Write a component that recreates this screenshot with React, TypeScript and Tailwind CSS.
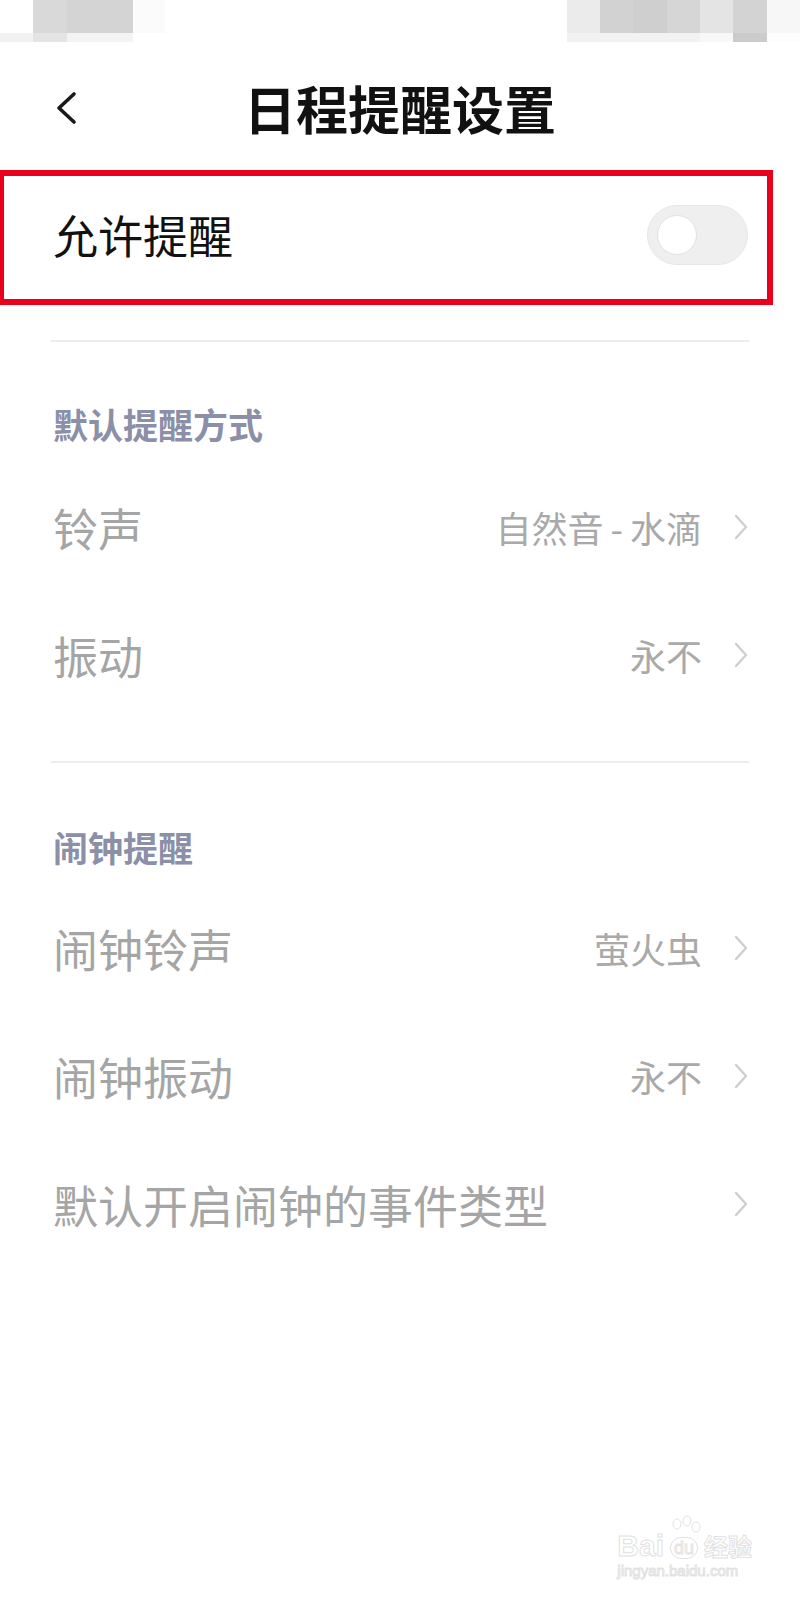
import { ReactNode } from "react";

const FONT = "font-['Noto_Sans_CJK_SC','Noto_Sans',sans-serif]";

function Chevron() {
  return (
    <svg width="16" height="28" viewBox="0 0 16 28" className="shrink-0">
      <polyline
        points="3,3 13,14 3,25"
        fill="none"
        stroke="#cfcfcf"
        strokeWidth="2.4"
        strokeLinecap="round"
        strokeLinejoin="round"
      />
    </svg>
  );
}

function Row({ label, value }: { label: string; value?: ReactNode }) {
  return (
    <div className="flex h-[128px] items-center justify-between pl-[53px] pr-[51px]">
      <span className="text-[45px] leading-[45px] text-[#a5a5a5]">{label}</span>
      <div className="flex items-center gap-[31px]">
        {value && (
          <span className="text-[36px] leading-[36px] text-[#a9a9a9]">{value}</span>
        )}
        <Chevron />
      </div>
    </div>
  );
}

function SectionHeader({ children }: { children: ReactNode }) {
  return (
    <div className="pl-[53px] text-[35px] font-semibold leading-[35px] text-[#8b8fa7]">
      {children}
    </div>
  );
}

function Divider({ className }: { className?: string }) {
  return <div className={"mx-[51px] h-[2px] bg-[#ececec] " + (className ?? "")} />;
}

// blurred status bar, drawn as mosaic blocks
function StatusBar() {
  return (
    <div className="flex h-[42px] justify-between">
      <div className="flex flex-col">
        <div className="flex h-[33px]">
          <div className="w-[33px] bg-white" />
          <div className="w-[34px] bg-[#d9d9d9]" />
          <div className="w-[66px] bg-[#d4d4d4]" />
          <div className="w-[32px] bg-[#fbfbfb]" />
        </div>
        <div className="flex h-[9px]">
          <div className="w-[33px] bg-[#f2f2f2]" />
          <div className="w-[34px] bg-[#e4e4e4]" />
          <div className="w-[66px] bg-[#f4f4f4]" />
        </div>
      </div>
      <div className="flex flex-col">
        <div className="flex h-[33px]">
          <div className="w-[33px] bg-[#ebebeb]" />
          <div className="w-[33px] bg-[#d2d2d2]" />
          <div className="w-[34px] bg-[#cfcfcf]" />
          <div className="w-[33px] bg-[#d6d6d6]" />
          <div className="w-[33px] bg-[#e4e4e4]" />
          <div className="w-[34px] bg-[#d3d3d3]" />
          <div className="w-[33px] bg-[#f7f7f7]" />
        </div>
        <div className="flex h-[9px]">
          <div className="w-[133px] bg-[#f2f2f2]" />
          <div className="w-[33px] bg-[#f8f8f8]" />
          <div className="w-[34px] bg-[#cbcbcb]" />
          <div className="w-[33px] bg-[#fdfdfd]" />
        </div>
      </div>
    </div>
  );
}

function Watermark() {
  return (
    <div className="absolute right-[48px] bottom-[22px] flex flex-col items-start text-white [-webkit-text-stroke:1px_#e2e2e2]">
      <div className="flex items-end">
        <span className="font-['Liberation_Sans',sans-serif] text-[30px] font-bold leading-[26px]">
          Bai
        </span>
        <div className="relative mx-[2px] flex h-[44px] w-[36px] items-end justify-center">
          <svg width="36" height="30" viewBox="0 0 36 30" className="absolute top-0 left-0">
            <g fill="none" stroke="#e2e2e2" strokeWidth="1">
              <ellipse cx="11" cy="9" rx="4" ry="5" />
              <ellipse cx="21" cy="6" rx="4" ry="5" />
              <ellipse cx="30" cy="12" rx="4" ry="5" />
            </g>
          </svg>
          <span className="relative rounded-full border border-[#e2e2e2] px-[3px] font-['Liberation_Sans',sans-serif] text-[18px] leading-[20px]">
            du
          </span>
        </div>
        <span className={FONT + " text-[24px] font-bold leading-[26px]"}>经验</span>
      </div>
      <span className="mt-[4px] font-['Liberation_Sans',sans-serif] text-[15px] leading-[15px]">
        jingyan.baidu.com
      </span>
    </div>
  );
}

export default function App() {
  return (
    <div className={"relative h-[1600px] w-[800px] overflow-hidden bg-white " + FONT}>
      <StatusBar />

      {/* nav */}
      <div className="grid h-[128px] grid-cols-[1fr_auto_1fr] items-center pt-[4px]">
        <div className="pl-[56px]">
          <svg width="22" height="34" viewBox="0 0 22 34">
            <polyline
              points="18,3 3,17 18,31"
              fill="none"
              stroke="#1a1a1a"
              strokeWidth="3.6"
              strokeLinecap="round"
              strokeLinejoin="round"
            />
          </svg>
        </div>
        <h1 className="text-[52px] font-bold leading-[52px] text-[#111111]">日程提醒设置</h1>
        <div />
      </div>

      {/* allow reminder, highlighted */}
      <div className="flex h-[135px] w-[773px] items-center justify-between border-[6px] border-l-4 border-[#e8001c] pr-[19px] pb-[6px] pl-[49px]">
        <span className="text-[45px] leading-[45px] text-[#111111]">允许提醒</span>
        <div className="flex h-[60px] w-[101px] items-center rounded-full border border-[#e7e7e7] bg-[#efefef] pl-[9px]">
          <div className="size-[40px] rounded-full border border-[#e2e2e2] bg-white" />
        </div>
      </div>

      <Divider className="mt-[35px]" />

      <div className="mt-[64px]">
        <SectionHeader>默认提醒方式</SectionHeader>
      </div>
      <div className="mt-[22px]">
        <Row
          label="铃声"
          value={
            <>
              自然音<span className="mx-[7px]">-</span>水滴
            </>
          }
        />
        <Row label="振动" value="永不" />
      </div>

      <Divider className="mt-[42px]" />

      <div className="mt-[66px]">
        <SectionHeader>闹钟提醒</SectionHeader>
      </div>
      <div className="mt-[20px]">
        <Row label="闹钟铃声" value="萤火虫" />
        <Row label="闹钟振动" value="永不" />
        <Row label="默认开启闹钟的事件类型" />
      </div>

      <Watermark />
    </div>
  );
}
